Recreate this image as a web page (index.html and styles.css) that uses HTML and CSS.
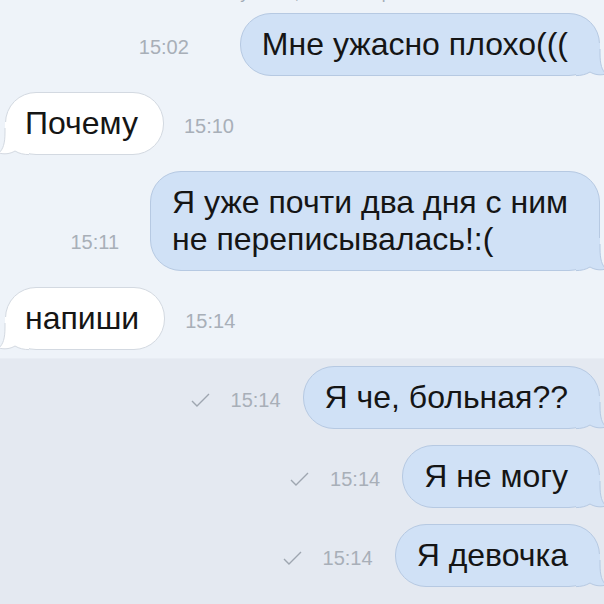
FILE: index.html
```html
<!DOCTYPE html>
<html lang="ru">
<head>
    <meta charset="UTF-8">
    <meta name="viewport" content="width=device-width, initial-scale=1.0">
    <title>Диалог</title>
    <link rel="stylesheet" href="styles.css">
</head>
<body>

    <div class="chat">
        <!-- Read messages -->
        <div class="history">
            <div class="day-label"><span>Суббота, 21 сентября</span></div>

            <div class="row out wide">
                <span class="time">15:02</span>
                <div class="bubble">
                    <span class="text">Мне ужасно плохо(((</span>
                    <svg class="tail" viewBox="0 0 30 34" width="30" height="34"><path class="tail-fill" d="M0 0 H24 V10 C24 22 26 27 30 31 C25 32.5 19 32 14 29 C10 31.5 5 32.6 0 32.6 Z"/><path class="tail-line" d="M24 6 V10 C24 22 26 27 30 31 C25 32.5 19 32 14 29 C10 31.5 5 32.6 0 32.6"/></svg>
                </div>
            </div>

            <div class="row in">
                <div class="bubble">
                    <span class="text">Почему</span>
                    <svg class="tail" viewBox="0 0 30 34" width="30" height="34"><path class="tail-fill" d="M0 0 H24 V10 C24 22 26 27 30 31 C25 32.5 19 32 14 29 C10 31.5 5 32.6 0 32.6 Z"/><path class="tail-line" d="M24 6 V10 C24 22 26 27 30 31 C25 32.5 19 32 14 29 C10 31.5 5 32.6 0 32.6"/></svg>
                </div>
                <span class="time">15:10</span>
            </div>

            <div class="row out mid">
                <span class="time">15:11</span>
                <div class="bubble">
                    <span class="text">Я уже почти два дня с ним<br>не переписывалась!:(</span>
                    <svg class="tail" viewBox="0 0 30 34" width="30" height="34"><path class="tail-fill" d="M0 0 H24 V10 C24 22 26 27 30 31 C25 32.5 19 32 14 29 C10 31.5 5 32.6 0 32.6 Z"/><path class="tail-line" d="M24 6 V10 C24 22 26 27 30 31 C25 32.5 19 32 14 29 C10 31.5 5 32.6 0 32.6"/></svg>
                </div>
            </div>

            <div class="row in">
                <div class="bubble">
                    <span class="text">напиши</span>
                    <svg class="tail" viewBox="0 0 30 34" width="30" height="34"><path class="tail-fill" d="M0 0 H24 V10 C24 22 26 27 30 31 C25 32.5 19 32 14 29 C10 31.5 5 32.6 0 32.6 Z"/><path class="tail-line" d="M24 6 V10 C24 22 26 27 30 31 C25 32.5 19 32 14 29 C10 31.5 5 32.6 0 32.6"/></svg>
                </div>
                <span class="time">15:14</span>
            </div>
        </div>

        <!-- Unread messages -->
        <div class="unread">
            <div class="row out">
                <svg class="check" viewBox="0 0 20 14" width="20" height="14"><polyline points="1,8 6,13 18,1"/></svg>
                <span class="time">15:14</span>
                <div class="bubble">
                    <span class="text">Я че, больная??</span>
                    <svg class="tail" viewBox="0 0 30 34" width="30" height="34"><path class="tail-fill" d="M0 0 H24 V10 C24 22 26 27 30 31 C25 32.5 19 32 14 29 C10 31.5 5 32.6 0 32.6 Z"/><path class="tail-line" d="M24 6 V10 C24 22 26 27 30 31 C25 32.5 19 32 14 29 C10 31.5 5 32.6 0 32.6"/></svg>
                </div>
            </div>

            <div class="row out">
                <svg class="check" viewBox="0 0 20 14" width="20" height="14"><polyline points="1,8 6,13 18,1"/></svg>
                <span class="time">15:14</span>
                <div class="bubble">
                    <span class="text">Я не могу</span>
                    <svg class="tail" viewBox="0 0 30 34" width="30" height="34"><path class="tail-fill" d="M0 0 H24 V10 C24 22 26 27 30 31 C25 32.5 19 32 14 29 C10 31.5 5 32.6 0 32.6 Z"/><path class="tail-line" d="M24 6 V10 C24 22 26 27 30 31 C25 32.5 19 32 14 29 C10 31.5 5 32.6 0 32.6"/></svg>
                </div>
            </div>

            <div class="row out">
                <svg class="check" viewBox="0 0 20 14" width="20" height="14"><polyline points="1,8 6,13 18,1"/></svg>
                <span class="time">15:14</span>
                <div class="bubble">
                    <span class="text">Я девочка</span>
                    <svg class="tail" viewBox="0 0 30 34" width="30" height="34"><path class="tail-fill" d="M0 0 H24 V10 C24 22 26 27 30 31 C25 32.5 19 32 14 29 C10 31.5 5 32.6 0 32.6 Z"/><path class="tail-line" d="M24 6 V10 C24 22 26 27 30 31 C25 32.5 19 32 14 29 C10 31.5 5 32.6 0 32.6"/></svg>
                </div>
            </div>
        </div>
    </div>

</body>
</html>
```

FILE: styles.css
```css
body {
    font-family: "Liberation Sans", Arial, sans-serif;
    margin: 0;
    padding: 0;
    background-color: #e4e9f1;
    overflow: hidden;
}

.chat {
    width: 604px;
    height: 604px;
    overflow: hidden;
}

.history {
    background-color: #eef3f9;
    padding: 0 0 8px;
    display: flex;
    flex-direction: column;
    gap: 16px;
    border-bottom: 1px solid #e8edf4;
}

.unread {
    background-color: #e4e9f1;
    padding: 7px 0 20px;
    display: flex;
    flex-direction: column;
    gap: 16px;
}

.day-label {
    height: 4px;
    overflow: hidden;
    margin-bottom: -7px;
    padding-left: 228px;
    font-size: 17px;
    color: #a4acb6;
}

.day-label span {
    display: block;
    line-height: 20px;
    margin-top: -16px;
}

.row {
    display: flex;
    align-items: flex-end;
}

.row.out {
    justify-content: flex-end;
    padding-right: 4px;
}

.row.in {
    padding-left: 5px;
}

.time {
    font-size: 20px;
    line-height: 20px;
    color: #a8afb8;
    margin-bottom: 19px;
}

.row.out .time {
    margin-right: 22px;
}

.row.out.wide .time {
    margin-right: 51px;
}

.row.out.mid .time {
    margin-right: 31px;
}

.row.in .time {
    margin-left: 20px;
}

.check {
    margin-right: 20px;
    margin-bottom: 22px;
}

.check polyline {
    fill: none;
    stroke: #9ea6b0;
    stroke-width: 1.4;
}

.bubble {
    position: relative;
    font-size: 32px;
    line-height: 37px;
    color: #151515;
    padding: 12px 31px 12px 21px;
    border-radius: 31px;
}

.text {
    position: relative;
    z-index: 1;
}

.row.out .bubble {
    background-color: #d0e1f6;
    border: 1px solid #b6c9e2;
}

.row.in .bubble {
    background-color: #ffffff;
    border: 1px solid #d3d9e1;
    padding: 12px 25px 12px 19px;
}

.tail {
    position: absolute;
    bottom: -2px;
    right: -7px;
}

.row.in .tail {
    right: auto;
    left: -7px;
    transform: scaleX(-1);
}

.tail-line {
    fill: none;
    stroke-width: 1;
}

.row.out .tail-fill {
    fill: #d0e1f6;
}

.row.out .tail-line {
    stroke: #b6c9e2;
}

.row.in .tail-fill {
    fill: #ffffff;
}

.row.in .tail-line {
    stroke: #d3d9e1;
}
```
